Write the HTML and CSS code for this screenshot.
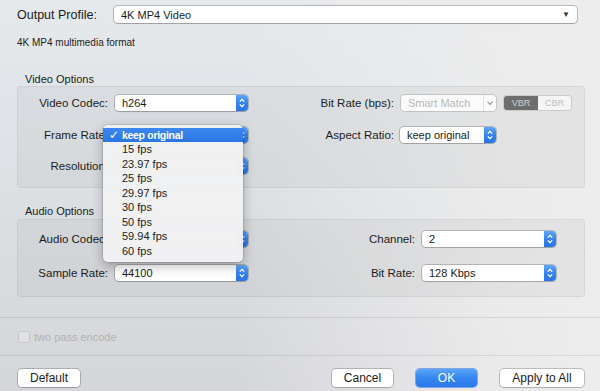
FILE: index.html
```html
<!DOCTYPE html>
<html lang="en">
<head>
    <meta charset="UTF-8">
    <title>Profile Settings</title>
    <link rel="stylesheet" href="styles.css">
</head>
<body>
    <div class="window">
        <!-- profile -->
        <div class="profile-row">
            <span class="profile-label">Output Profile:</span>
            <div class="popup">
                <span>4K MP4 Video</span>
                <span class="popup-arrow">&#9660;</span>
            </div>
        </div>
        <p class="desc">4K MP4 multimedia format</p>

        <!-- video -->
        <div class="group-title">Video Options</div>
        <div class="group video">
            <span class="label">Video Codec:</span>
            <div class="select">h264<span class="stepper"><svg width="12" height="16" viewBox="0 0 12 16"><path d="M3.8 6.6L6 4.4l2.2 2.2M3.8 9.4L6 11.6l2.2-2.2" fill="none" stroke="#fff" stroke-width="1.3"/></svg></span></div>
            <span class="label">Bit Rate (bps):</span>
            <div class="bitrate">
                <div class="select disabled">Smart Match<span class="chev"><svg width="12" height="16" viewBox="0 0 12 16"><path d="M3.5 6.8L6 9.3l2.5-2.5" fill="none" stroke="#9a9a9a" stroke-width="1.2"/></svg></span></div>
                <div class="segment">
                    <span class="seg on">VBR</span>
                    <span class="seg">CBR</span>
                </div>
            </div>

            <span class="label">Frame Rate:</span>
            <!-- the open menu hides this popup's value -->
            <div class="select has-menu"><span class="stepper"><svg width="12" height="16" viewBox="0 0 12 16"><path d="M3.8 6.6L6 4.4l2.2 2.2M3.8 9.4L6 11.6l2.2-2.2" fill="none" stroke="#fff" stroke-width="1.3"/></svg></span>
                <ul class="menu">
                    <li class="picked"><span class="check">&#10003;</span>keep original</li>
                    <li>15 fps</li>
                    <li>23.97 fps</li>
                    <li>25 fps</li>
                    <li>29.97 fps</li>
                    <li>30 fps</li>
                    <li>50 fps</li>
                    <li>59.94 fps</li>
                    <li>60 fps</li>
                </ul>
            </div>
            <span class="label">Aspect Ratio:</span>
            <div class="select short">keep original<span class="stepper"><svg width="12" height="16" viewBox="0 0 12 16"><path d="M3.8 6.6L6 4.4l2.2 2.2M3.8 9.4L6 11.6l2.2-2.2" fill="none" stroke="#fff" stroke-width="1.3"/></svg></span></div>

            <span class="label">Resolution:</span>
            <div class="select"><span class="stepper"><svg width="12" height="16" viewBox="0 0 12 16"><path d="M3.8 6.6L6 4.4l2.2 2.2M3.8 9.4L6 11.6l2.2-2.2" fill="none" stroke="#fff" stroke-width="1.3"/></svg></span></div>
        </div>

        <!-- audio -->
        <div class="group-title audio-title">Audio Options</div>
        <div class="group audio">
            <span class="label">Audio Codec:</span>
            <div class="select"><span class="stepper"><svg width="12" height="16" viewBox="0 0 12 16"><path d="M3.8 6.6L6 4.4l2.2 2.2M3.8 9.4L6 11.6l2.2-2.2" fill="none" stroke="#fff" stroke-width="1.3"/></svg></span></div>
            <span class="label">Channel:</span>
            <div class="select">2<span class="stepper"><svg width="12" height="16" viewBox="0 0 12 16"><path d="M3.8 6.6L6 4.4l2.2 2.2M3.8 9.4L6 11.6l2.2-2.2" fill="none" stroke="#fff" stroke-width="1.3"/></svg></span></div>

            <span class="label">Sample Rate:</span>
            <div class="select">44100<span class="stepper"><svg width="12" height="16" viewBox="0 0 12 16"><path d="M3.8 6.6L6 4.4l2.2 2.2M3.8 9.4L6 11.6l2.2-2.2" fill="none" stroke="#fff" stroke-width="1.3"/></svg></span></div>
            <span class="label">Bit Rate:</span>
            <div class="select">128 Kbps<span class="stepper"><svg width="12" height="16" viewBox="0 0 12 16"><path d="M3.8 6.6L6 4.4l2.2 2.2M3.8 9.4L6 11.6l2.2-2.2" fill="none" stroke="#fff" stroke-width="1.3"/></svg></span></div>
        </div>

        <div class="rule first"></div>
        <div class="option-row">
            <span class="checkbox"></span>
            <span class="option-text">two pass encode</span>
        </div>
        <div class="rule"></div>

        <!-- buttons -->
        <div class="footer">
            <button type="button" class="btn default">Default</button>
            <span class="spacer"></span>
            <button type="button" class="btn cancel">Cancel</button>
            <button type="button" class="btn ok">OK</button>
            <button type="button" class="btn apply">Apply to All</button>
        </div>
    </div>
</body>
</html>
```

FILE: styles.css
```css
body {
    margin: 0;
    width: 600px;
    height: 391px;
    overflow: hidden;
    font-family: "Liberation Sans", Arial, sans-serif;
    color: #1c1c1c;
    background:
        linear-gradient(90deg, rgba(237, 237, 237, 0) 40%, rgba(237, 237, 237, 0.85) 82%, #ededed 100%),
        linear-gradient(180deg, #e6e9ec 0%, #e0e4e8 30%, #d9dbde 70%, #d5d6da 100%);
}
.window {
    height: 391px;
    padding-top: 6px;
    box-sizing: border-box;
}
.profile-row {
    display: flex;
    align-items: center;
    padding-left: 17px;
    height: 17px;
}
.profile-label {
    width: 97px;
    font-size: 12.5px;
}
.popup {
    width: 463px;
    height: 17px;
    box-sizing: border-box;
    display: flex;
    align-items: center;
    padding: 0 7px;
    background: #fff;
    border-radius: 4px;
    box-shadow: 0 0 0 1px rgba(0, 0, 0, 0.22), 0 1px 1px rgba(0, 0, 0, 0.12);
    font-size: 11px;
}
.popup-arrow {
    margin-left: auto;
    font-size: 8px;
    color: #333;
}
.desc {
    margin: 14px 0 0 17px;
    font-size: 10px;
    line-height: 12px;
    color: #1e1e1e;
}
.group-title {
    margin: 24px 0 0 25px;
    font-size: 11px;
    line-height: 12px;
}
.audio-title {
    margin-top: 17px;
}
.group {
    margin: 1px 15px 0 17px;
    border: 1px solid rgba(0, 0, 0, 0.06);
    border-radius: 4px;
    background: rgba(0, 0, 0, 0.035);
    display: grid;
    column-gap: 7px;
    grid-auto-rows: 16px;
    align-items: center;
}
.video {
    grid-template-columns: 90px 133px 1fr 177px;
    row-gap: 15.5px;
    padding: 8px 6px 13px 0;
}
.audio {
    margin-top: 2px;
    grid-template-columns: 90px 133px 1fr 134px;
    row-gap: 18px;
    padding: 11px 28px 15px 0;
}
.label {
    text-align: right;
    font-size: 11.5px;
    line-height: 16px;
}
.select {
    height: 16px;
    display: flex;
    align-items: center;
    padding-left: 7px;
    background: #fff;
    border-radius: 4px;
    box-shadow: 0 0 0 1px rgba(0, 0, 0, 0.2), 0 1px 1px rgba(0, 0, 0, 0.1);
    font-size: 11px;
}
.short {
    width: 89px;
    margin-left: -1px;
}
.stepper {
    margin-left: auto;
    width: 12px;
    height: 16px;
    border-radius: 0 4px 4px 0;
    background: linear-gradient(180deg, #5ea6f9 0%, #3584ee 50%, #2a73e6 100%);
    display: flex;
}
.bitrate {
    display: flex;
    align-items: center;
}
.disabled {
    width: 88px;
    background: #fbfbfb;
    color: #b8b8b8;
    box-shadow: 0 0 0 1px rgba(0, 0, 0, 0.13);
}
.chev {
    margin-left: auto;
    width: 12px;
    height: 16px;
    display: flex;
    border-left: 1px solid #e2e2e2;
}
.segment {
    display: flex;
    margin-left: 8px;
    height: 14px;
    border-radius: 3px;
    overflow: hidden;
    box-shadow: 0 0 0 1px rgba(0, 0, 0, 0.1);
}
.seg {
    width: 33px;
    display: flex;
    align-items: center;
    justify-content: center;
    font-size: 9px;
    background: #f5f5f5;
    color: #bdbdbd;
}
.seg.on {
    width: 34px;
    background: #6e6e6e;
    color: #d2d2d2;
}
.has-menu {
    position: relative;
}
.menu {
    position: absolute;
    left: -12px;
    top: -2px;
    z-index: 10;
    width: 140px;
    margin: 0;
    padding: 3px 0 4px;
    list-style: none;
    background: rgba(241, 241, 242, 0.98);
    border-radius: 5px;
    box-shadow: 0 0 0 1px rgba(0, 0, 0, 0.1), 0 4px 12px rgba(0, 0, 0, 0.28);
}
.menu li {
    position: relative;
    height: 14.5px;
    line-height: 14.5px;
    padding-left: 19px;
    font-size: 11px;
    color: #222;
}
.menu .picked {
    background: linear-gradient(180deg, #3c88ee, #2a76e6);
    color: #fff;
    font-weight: bold;
    font-size: 10.5px;
    letter-spacing: -0.3px;
}
.check {
    position: absolute;
    left: 6px;
    top: 0;
    font-family: "DejaVu Sans", sans-serif;
    font-size: 12px;
    font-weight: bold;
    letter-spacing: 0;
}
.rule {
    height: 1px;
    background: rgba(0, 0, 0, 0.09);
    margin-top: 11px;
}
.rule.first {
    margin-top: 20px;
}
.option-row {
    display: flex;
    align-items: center;
    gap: 4px;
    height: 14px;
    margin: 12px 0 0 18px;
}
.checkbox {
    width: 10px;
    height: 10px;
    border: 1px solid #c6c6c8;
    border-radius: 3px;
    background: #e1e2e4;
}
.option-text {
    font-size: 11px;
    color: #b3b3b5;
}
.footer {
    display: flex;
    align-items: center;
    gap: 23px;
    margin-top: 13px;
    padding: 0 16px 0 18px;
}
.spacer {
    flex: 1;
}
.btn {
    height: 18px;
    padding: 0;
    border: none;
    border-radius: 4px;
    background: #fff;
    box-shadow: 0 0 0 1px rgba(0, 0, 0, 0.2), 0 1px 1px rgba(0, 0, 0, 0.08);
    font-family: "Liberation Sans", Arial, sans-serif;
    font-size: 12px;
    color: #1c1c1c;
}
.default {
    width: 62px;
}
.cancel {
    width: 61px;
}
.ok {
    width: 61px;
    background: linear-gradient(180deg, #5aa4f9 0%, #3586f0 50%, #2a78ec 100%);
    color: #fff;
    box-shadow: 0 0 0 1px rgba(30, 100, 220, 0.5);
}
.apply {
    width: 84px;
}
```
